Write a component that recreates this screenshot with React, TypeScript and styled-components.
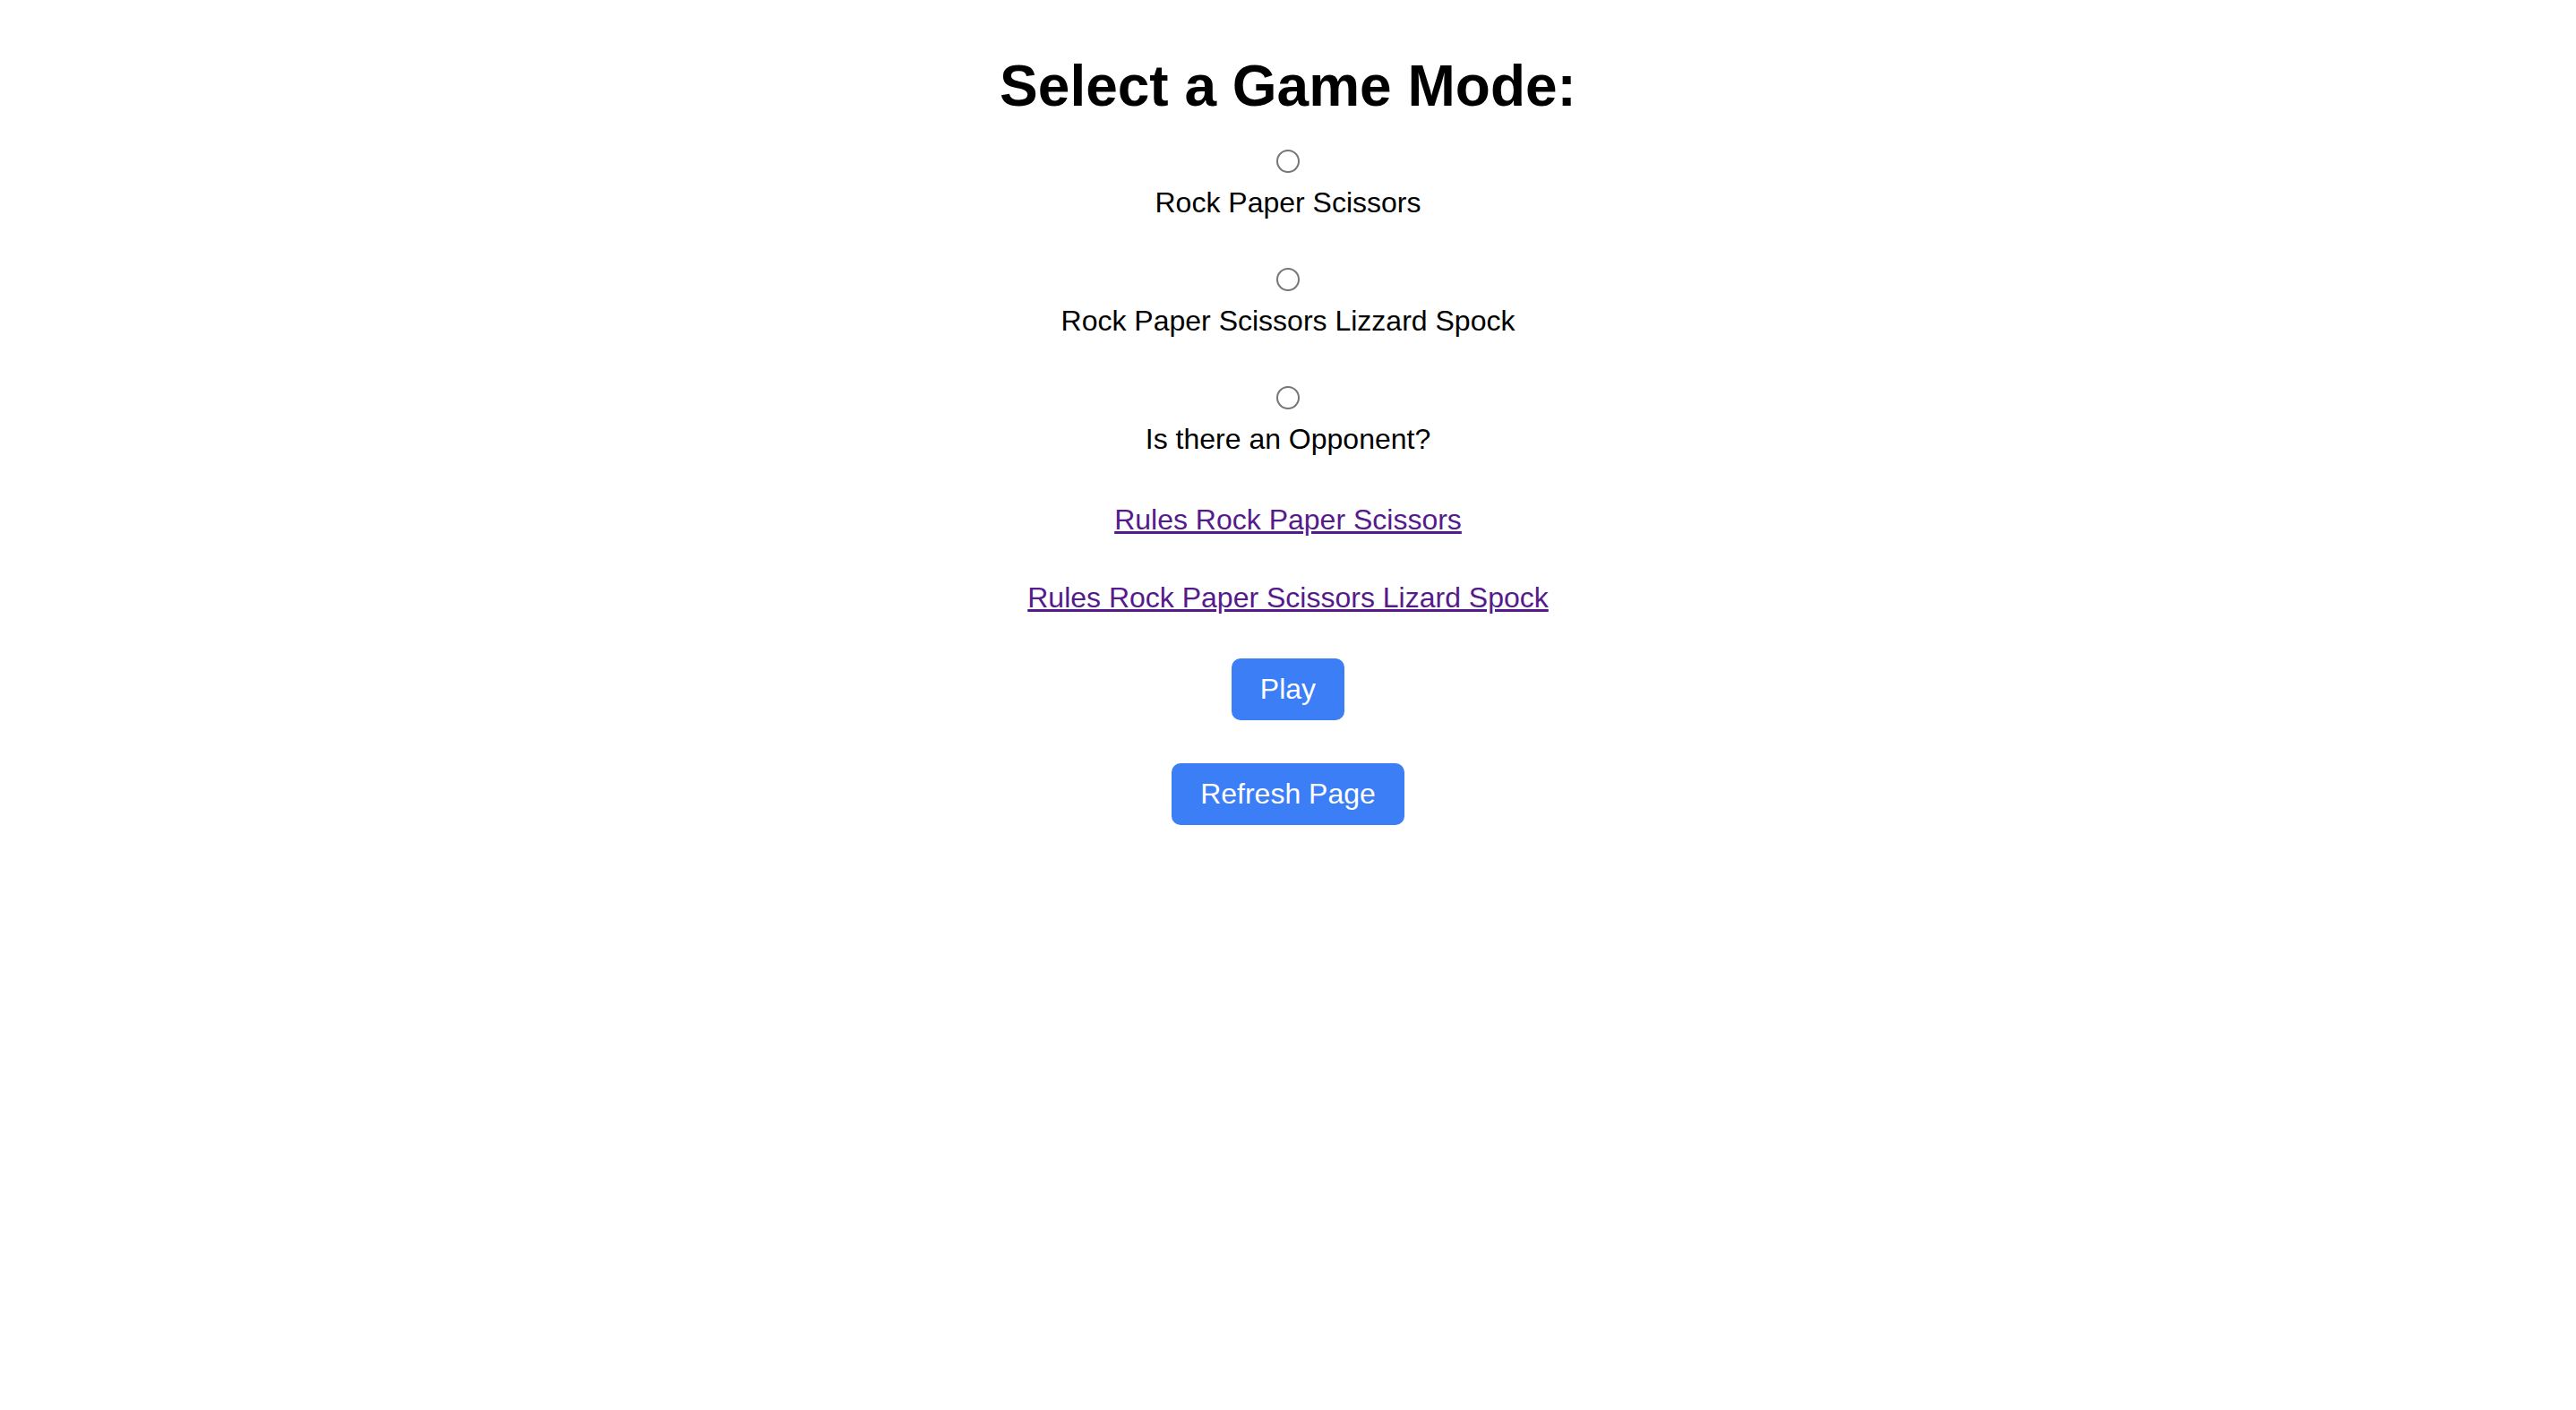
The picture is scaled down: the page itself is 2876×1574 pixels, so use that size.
import React from "react";
import styled, { createGlobalStyle } from "styled-components";

const GlobalStyle = createGlobalStyle`
  html, body {
    margin: 0;
    padding: 0;
    background: #ffffff;
  }
  body {
    font-family: "Liberation Sans", Arial, sans-serif;
    color: #000000;
  }
`;

const Page = styled.main`
  display: flex;
  flex-direction: column;
  align-items: center;
  padding-top: 59px;
  min-height: 100vh;
  box-sizing: border-box;
`;

const Title = styled.h1`
  margin: 0 0 34px;
  font-size: 64px;
  font-weight: 700;
  line-height: normal;
`;

const OptionList = styled.div`
  display: flex;
  flex-direction: column;
  align-items: center;
  gap: 54px;
`;

const Option = styled.label`
  display: flex;
  flex-direction: column;
  align-items: center;
  gap: 15px;
  cursor: pointer;
`;

const Radio = styled.input.attrs({ type: "radio" })`
  appearance: none;
  -webkit-appearance: none;
  margin: 0;
  width: 26px;
  height: 26px;
  border: 2px solid #767676;
  border-radius: 50%;
  background: #ffffff;
  box-sizing: border-box;
  &:checked {
    border-color: #1a73e8;
    box-shadow: inset 0 0 0 5px #ffffff;
    background: #1a73e8;
  }
`;

const OptionText = styled.span`
  font-size: 32px;
  line-height: normal;
`;

const Links = styled.nav`
  display: flex;
  flex-direction: column;
  align-items: center;
  gap: 50px;
  margin-top: 53px;
`;

const RuleLink = styled.a`
  font-size: 32px;
  line-height: normal;
  color: #551a8b;
  text-decoration: underline;
`;

const Actions = styled.div`
  display: flex;
  flex-direction: column;
  align-items: center;
  gap: 48px;
  margin-top: 49px;
`;

const Button = styled.button`
  font-family: "Liberation Sans", Arial, sans-serif;
  font-size: 32px;
  line-height: normal;
  color: #ffffff;
  background: #3b7ef6;
  border: none;
  border-radius: 10px;
  padding: 16px 32px;
  cursor: pointer;
`;

const modes = [
  "Rock Paper Scissors",
  "Rock Paper Scissors Lizzard Spock",
  "Is there an Opponent?",
];

export default function App() {
  return (
    <>
      <GlobalStyle />
      <Page>
        <Title>Select a Game Mode:</Title>
        <OptionList>
          {modes.map((m, i) => (
            <Option key={m}>
              <Radio name={i < 2 ? "mode" : "opponent"} />
              <OptionText>{m}</OptionText>
            </Option>
          ))}
        </OptionList>
        <Links>
          <RuleLink href="#rps">Rules Rock Paper Scissors</RuleLink>
          <RuleLink href="#rpsls">Rules Rock Paper Scissors Lizard Spock</RuleLink>
        </Links>
        <Actions>
          <Button>Play</Button>
          <Button>Refresh Page</Button>
        </Actions>
      </Page>
    </>
  );
}
